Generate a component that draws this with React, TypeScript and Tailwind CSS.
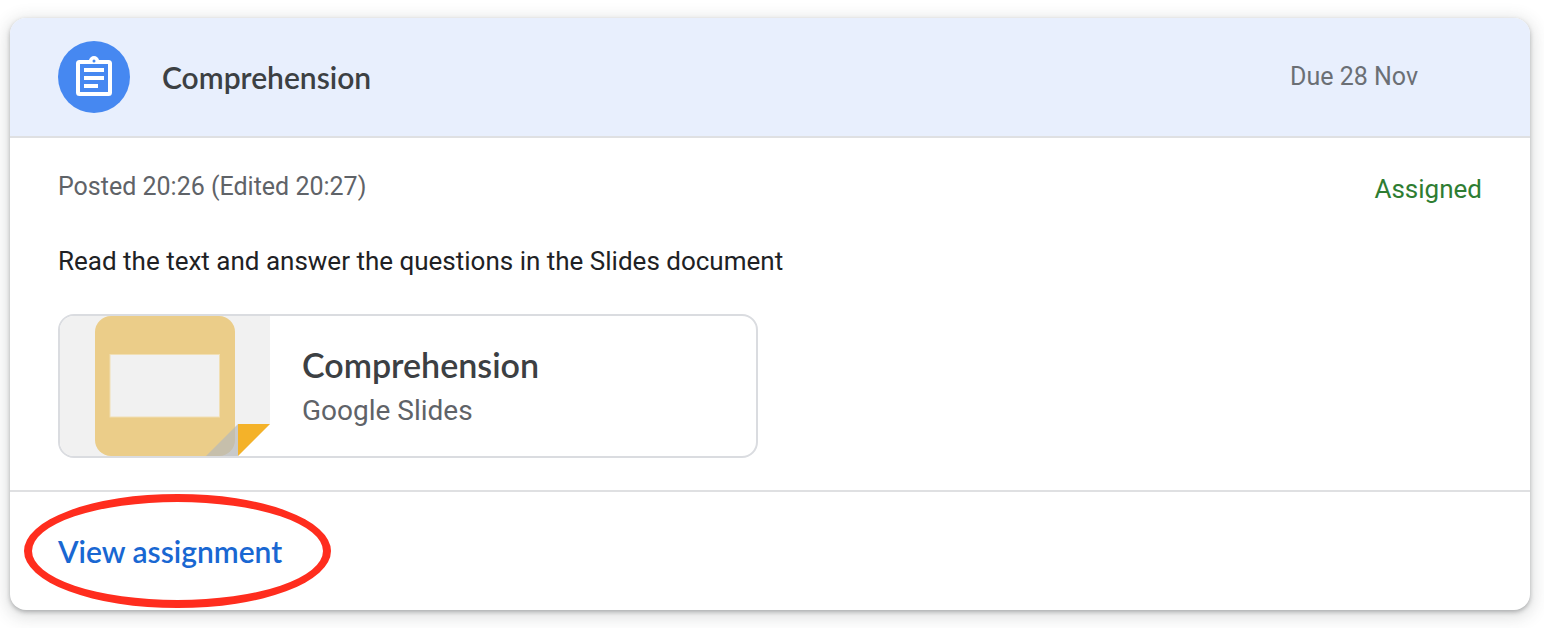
const AssignmentIcon = () => (
  <svg viewBox="0 0 36 42" className="h-[42px] w-9" fill="currentColor" aria-hidden="true">
    <path
      fillRule="evenodd"
      d="M3.5 4H13c.5-2.3 2.5-4 5-4s4.5 1.700 5 4h9.500A3.500 3.500 0 0 1 36 7.500v29a3.500 3.500 0 0 1-3.500 3.500h-29A3.500 3.500 0 0 1 0 36.500v-29A3.500 3.500 0 0 1 3.500 4zM4 8v28h28V8zM18 3.500a1.500 1.500 0 1 0 0 3 1.500 1.500 0 0 0 0-3z"
    />
    <path d="M8 12h20v4H8zM8 20h20v4H8zM8 28h14v4H8z" />
  </svg>
);

const SlidesThumbnail = () => (
  <svg viewBox="0 0 210 140" className="h-[140px] w-[210px] shrink-0" aria-hidden="true">
    <rect width="210" height="140" fill="#f1f1f1" />
    <rect x="35" width="140" height="140" rx="16" fill="#ebcd89" />
    <rect x="50" y="38.5" width="109.5" height="62.5" fill="#f1f1f1" stroke="#f1dfb4" />
    <path d="M146 140l32-32v32z" fill="#b7b9b8" fillOpacity="0.71" />
    <path d="M210 108v32h-32z" fill="#fff" />
    <path d="M178 108h32l-32 32z" fill="#f4b229" />
  </svg>
);

const CardHeader = () => (
  <header className="flex items-center rounded-t-2xl border-b-2 border-[#dfe0e2] bg-[#e8effd] py-[23px] pr-28 pl-12">
    <div className="flex size-[72px] shrink-0 items-center justify-center rounded-full bg-[#4688f1] text-white">
      <AssignmentIcon />
    </div>
    <h2 className="ml-8 flex-1 font-[Lato,sans-serif] text-[30px] leading-8 font-semibold text-[#3c4043]">
      Comprehension
    </h2>
    <p className="text-[25px] leading-[34px] text-[#6b6f75]">Due 28 Nov</p>
  </header>
);

const Attachment = () => (
  <a
    href="#slides"
    className="mt-9 flex w-full max-w-[700px] items-center overflow-hidden rounded-2xl border-2 border-[#dadce0]"
  >
    <SlidesThumbnail />
    <div className="px-8 pt-1">
      <h3 className="font-[Lato,sans-serif] text-[34px] leading-[46px] font-semibold text-[#3c4043]">
        Comprehension
      </h3>
      <p className="text-[28px] leading-[46px] text-[#5f6368]">Google Slides</p>
    </div>
  </a>
);

const App = () => (
  <div className="overflow-hidden bg-white pt-[18px] pr-[14px] pb-[18px] pl-[10px] font-[Roboto,sans-serif]">
    <article className="rounded-2xl bg-white shadow-[0_2px_4px_rgba(60,64,67,0.35),0_4px_16px_4px_rgba(60,64,67,0.15)]">
      <CardHeader />

      <div className="px-12 pt-8 pb-8">
        <div className="flex items-start justify-between">
          <p className="text-[25px] leading-[34px] text-[#5f6368]">Posted 20:26 (Edited 20:27)</p>
          <p className="text-[26px] leading-[38px] text-[#2e7d32]">Assigned</p>
        </div>
        <p className="mt-9 text-[26px] leading-[34px] text-[#202124]">
          Read the text and answer the questions in the Slides document
        </p>
        <Attachment />
      </div>

      <footer className="relative flex h-[120px] items-center border-t-2 border-[#dfe0e2] px-12">
        <a
          href="#assignment"
          className="font-[Lato,sans-serif] text-[30px] leading-8 font-semibold text-[#1967d2]"
        >
          View assignment
        </a>
        <div className="pointer-events-none absolute top-[2px] left-[14px] h-[114px] w-[307px] rounded-[50%] border-8 border-[#ff2d1e]" />
      </footer>
    </article>
  </div>
);

export default App;
